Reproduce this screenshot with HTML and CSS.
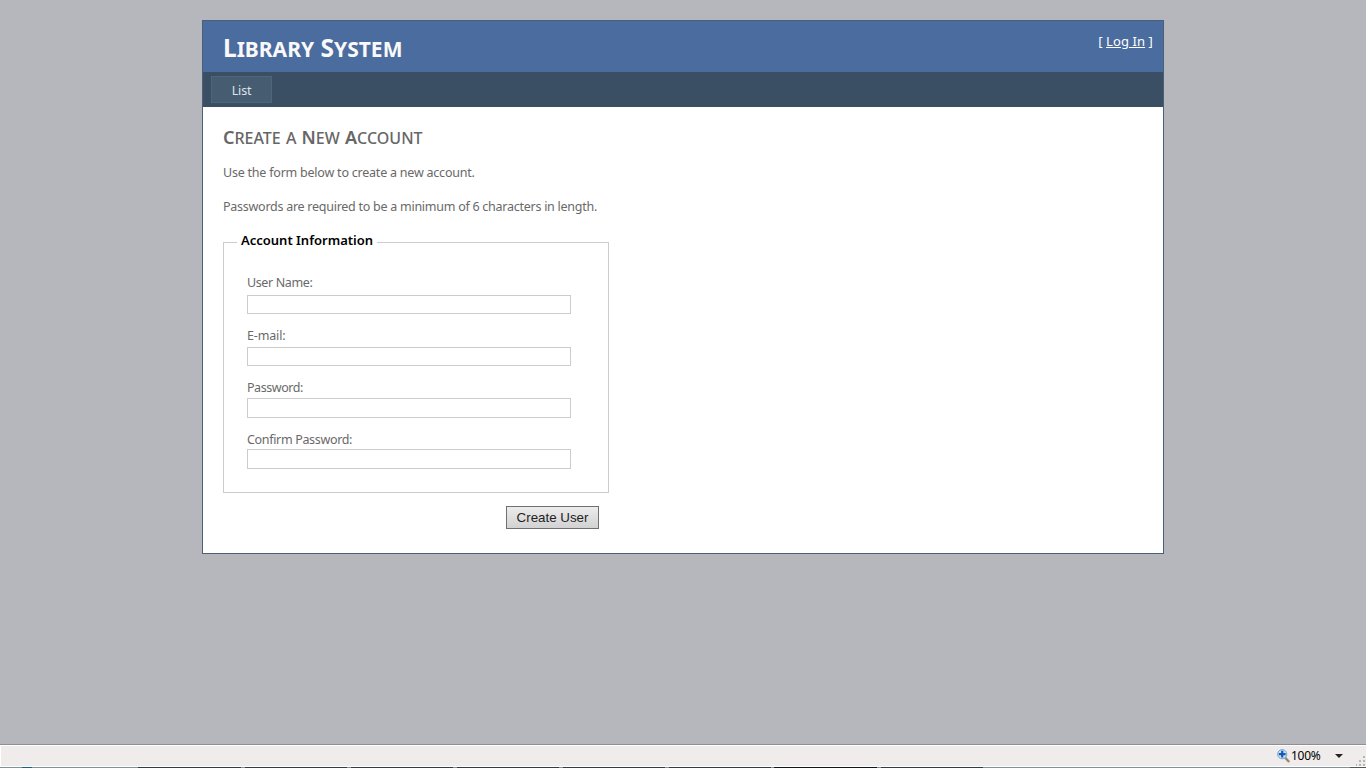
FILE: index.html
```html
<!DOCTYPE html>
<html lang="en">
<head>
<meta charset="utf-8">
<title>Library System</title>
<link rel="stylesheet" href="styles.css">
</head>
<body>
<div class="viewport">
  <div class="page">
    <header class="header">
      <h1 class="title"><span class="cap">L</span>ibrary <span class="cap">S</span>ystem</h1>
      <div class="login">[ <a class="login-link" href="#">Log In</a> ]</div>
    </header>
    <nav class="menu"><a class="menu-item" href="#">List</a></nav>
    <main class="main">
      <h2 class="heading"><span class="cap">C</span>reate a <span class="cap">N</span>ew <span class="cap">A</span>ccount</h2>
      <p class="text intro">Use the form below to create a new account.</p>
      <p class="text rule">Passwords are required to be a minimum of 6 characters in length.</p>
      <form class="form">
        <fieldset class="account">
          <legend class="legend">Account Information</legend>
          <div class="fields">
            <label class="label l-user" for="user">User Name:</label>
            <input class="input" id="user" type="text">
            <label class="label l-mail" for="mail">E-mail:</label>
            <input class="input" id="mail" type="text">
            <label class="label l-pass" for="pass">Password:</label>
            <input class="input tall" id="pass" type="password">
            <label class="label l-conf" for="conf">Confirm Password:</label>
            <input class="input tall" id="conf" type="password">
          </div>
        </fieldset>
        <div class="actions"><button class="button" type="button">Create User</button></div>
      </form>
    </main>
  </div>
</div>
<footer class="status">
  <svg class="zoom-icon" width="13" height="14" viewBox="0 0 13 14">
    <path d="M8 8.5l3.5 3.8" stroke="#9a8570" stroke-width="2.4" stroke-linecap="round"/>
    <circle cx="5.2" cy="5.2" r="4.6" fill="#c5e2f8" stroke="#79a5cb"/>
    <path d="M5.2 1.8v6.8M1.8 5.2h6.8" stroke="#1459b5" stroke-width="2.2"/>
  </svg>
  <span class="zoom-text">100%</span>
  <span class="arrow"></span>
  <svg class="grip" width="10" height="10" viewBox="0 0 10 10" fill="#b9b5b4">
    <path d="M7 0h2v2h-2zM7 4h2v2h-2zM3 4h2v2h-2zM7 8h2v2h-2zM3 8h2v2h-2zM0 8h1v2h-1z"/>
  </svg>
</footer>
<div class="taskbar"></div>
</body>
</html>
```

FILE: styles.css
```css
* { box-sizing: border-box; }
body {
  margin: 0;
  height: 768px;
  overflow: hidden;
  background: #b6b7bc;
  font-family: "Noto Sans", "Open Sans", sans-serif;
  font-size: 12.5px;
  color: #696969;
}
.viewport { height: 744px; padding-top: 20px; }
.page {
  width: 962px;
  height: 534px;
  margin: 0 auto;
  background: #fff;
  border: 1px solid #496077;
}
.header {
  display: flex;
  justify-content: space-between;
  height: 51px;
  padding: 0 10px 0 20px;
  background: #4b6c9e;
}
.title {
  margin: 0;
  font-size: 21px;
  line-height: 54px;
  font-weight: 700;
  letter-spacing: 0;
  word-spacing: 1px;
  text-transform: uppercase;
  color: #f9f9f9;
  white-space: nowrap;
}
.title .cap { font-size: 24.5px; }
.login { padding-top: 10px; line-height: 20px; color: #fff; font-size: 13px; letter-spacing: 0.1px; }
.login-link { color: #fff; }
.menu { height: 35px; padding: 4px 0 0 8px; background: #3a4f63; }
.menu-item {
  display: block;
  width: 61px;
  height: 27px;
  border: 1px solid #4e667d;
  background: #465c71;
  color: #dde4ec;
  line-height: 27px;
  letter-spacing: -0.15px;
  text-align: center;
  text-decoration: none;
}
.main { padding: 18px 20px 0; }
.heading {
  height: 25px;
  margin: 0;
  font-size: 16px;
  line-height: 24px;
  font-weight: 500;
  letter-spacing: 0;
  word-spacing: 1px;
  text-transform: uppercase;
  white-space: nowrap;
  color: #666;
}
.heading .cap { font-size: 18px; font-weight: 600; }
.text { margin: 0; line-height: 18px; letter-spacing: -0.22px; }
.intro { margin-top: 14px; }
.rule { margin-top: 16px; letter-spacing: -0.26px; }
.form { width: 386px; margin-top: 15px; }
.account {
  width: 386px;
  height: 262px;
  margin: 0;
  padding: 0 23px 0 23px;
  border: 1px solid #ccc;
}
.legend {
  margin-left: -10px;
  padding: 0 4px 4px;
  font-size: 13px;
  line-height: 18px;
  font-weight: 600;
  color: #000;
}
.fields { display: flex; flex-direction: column; padding-top: 21px; }
.label { height: 18px; line-height: 18px; letter-spacing: -0.38px; }
.l-user { margin-bottom: 3px; }
.l-mail { margin: 13px 0 2px; letter-spacing: -0.15px; }
.l-pass { margin: 13px 0 1px; letter-spacing: -0.45px; }
.l-conf { margin: 13px 0 0; letter-spacing: -0.33px; }
.input { width: 324px; height: 19px; margin: 0; padding: 0; border: 1px solid #ccc; background: #fff; }
.tall { height: 20px; }
.actions { display: flex; justify-content: flex-end; padding: 13px 10px 0 0; }
.button {
  width: 93px;
  height: 23px;
  padding: 0;
  border: 1px solid #707070;
  border-radius: 0;
  background: linear-gradient(#ececec, #d2d2d2);
  font: 13.33px "Liberation Sans", sans-serif;
  color: #222;
}
.status {
  display: flex;
  align-items: center;
  height: 23px;
  padding-left: 1277px;
  background: #f0eceb;
  border-top: 1px solid #8f8f91;
  border-bottom: 1px solid #fff;
  box-shadow: inset 1px 1px #fff;
}
.zoom-icon { flex: none; }
.zoom-text { margin-left: 1px; width: 31px; font: 12px/20px "Noto Sans", sans-serif; letter-spacing: -0.3px; color: #000; }
.arrow { margin-left: 13px; border: 4px solid transparent; border-top-color: #222; border-bottom: 0; }
.grip { margin: 11px 0 0 13px; }
.taskbar {
  height: 1px;
  background: linear-gradient(90deg, #7f919b 0 22px, #176189 22px 32px, #7f919b 32px 138px, #333c45 138px 241px, #7f919b 241px 245px, #333c45 245px 347px, #7f919b 347px 351px, #333c45 351px 453px, #7f919b 453px 457px, #333c45 457px 559px, #7f919b 559px 563px, #333c45 563px 665px, #7f919b 665px 669px, #333c45 669px 771px, #7f919b 771px 774px, #11151a 774px 877px, #7f919b 877px 881px, #333c45 881px 983px, #7f919b 983px 1350px, #555 1350px);
}
```
